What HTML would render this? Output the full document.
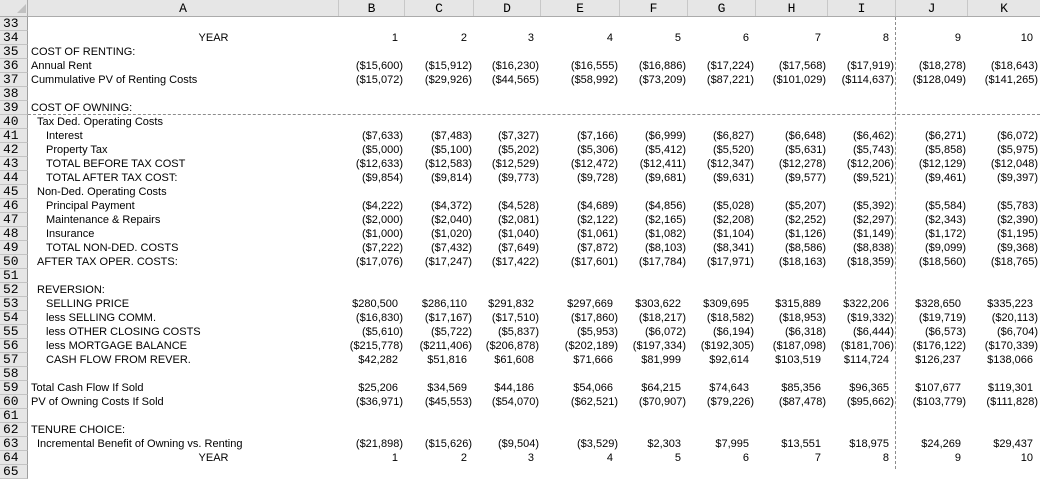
<!DOCTYPE html>
<html><head><meta charset="utf-8"><style>
*{margin:0;padding:0;box-sizing:border-box}
body{width:1040px;height:469px;overflow:hidden;background:#fff;font-family:"Liberation Sans",Arial,sans-serif;font-size:11px;color:#000;position:relative}
.hd{position:absolute;left:0;top:0;height:17px;width:1040px;background:#e6e6e6;border-bottom:1px solid #ababab;display:flex}
.hd div{height:16px;border-right:1px solid #c8c8c8;text-align:center;font-family:"Liberation Mono",monospace;font-size:13px;line-height:18px}
.r{position:absolute;left:0;height:14px;width:1040px;display:flex;line-height:15px;white-space:nowrap}
.r s{text-decoration:none;width:28px;flex:none;background:#e6e6e6;border-right:1px solid #9e9e9e;border-bottom:1px solid #c4c4c4;font-family:"Liberation Mono",monospace;font-size:13px;text-align:left;padding-left:3px;line-height:13px}
.r u{text-decoration:none;width:311px;flex:none;padding-left:3px;overflow:hidden}
.r u.a{padding-left:9px}.r u.b{padding-left:18px}.r u.c{text-align:center;padding-left:60px}
.r i{font-style:normal;flex:none;text-align:right;padding-right:2px}
.r i.p{padding-right:7px}
.w1{width:66px}.w2{width:69px}.w3{width:67px}.w4{width:79px}.w5{width:68px}.w6{width:68px}.w7{width:72px}.w8{width:68px}.w9{width:72px}.w10{width:72px}
.vb{position:absolute;left:895px;top:17px;height:452px;border-left:1px dashed #8c8c8c}
.hb{position:absolute;left:28px;top:114px;width:1012px;border-top:1px dashed #8c8c8c}
.corner{position:absolute;left:17px;top:4px;width:0;height:0;border-left:9px solid transparent;border-bottom:9px solid #c0c0c0}
</style></head><body>
<div class="hd"><div style="width:28px;border-right:1px solid #ababab"></div><div style="width:311px">A</div><div style="width:66px">B</div><div style="width:69px">C</div><div style="width:67px">D</div><div style="width:79px">E</div><div style="width:68px">F</div><div style="width:68px">G</div><div style="width:72px">H</div><div style="width:68px">I</div><div style="width:72px">J</div><div style="width:72px;border-right:none">K</div></div>
<div class="corner"></div>

<div class="r" style="top:17px"><s>33</s><u></u></div>
<div class="r" style="top:31px"><s>34</s><u class="c">YEAR</u><i class="p w1">1</i><i class="p w2">2</i><i class="p w3">3</i><i class="p w4">4</i><i class="p w5">5</i><i class="p w6">6</i><i class="p w7">7</i><i class="p w8">8</i><i class="p w9">9</i><i class="p w10">10</i></div>
<div class="r" style="top:45px"><s>35</s><u>COST OF RENTING:</u></div>
<div class="r" style="top:59px"><s>36</s><u>Annual Rent</u><i class="w1">($15,600)</i><i class="w2">($15,912)</i><i class="w3">($16,230)</i><i class="w4">($16,555)</i><i class="w5">($16,886)</i><i class="w6">($17,224)</i><i class="w7">($17,568)</i><i class="w8">($17,919)</i><i class="w9">($18,278)</i><i class="w10">($18,643)</i></div>
<div class="r" style="top:73px"><s>37</s><u>Cummulative PV of Renting Costs</u><i class="w1">($15,072)</i><i class="w2">($29,926)</i><i class="w3">($44,565)</i><i class="w4">($58,992)</i><i class="w5">($73,209)</i><i class="w6">($87,221)</i><i class="w7">($101,029)</i><i class="w8">($114,637)</i><i class="w9">($128,049)</i><i class="w10">($141,265)</i></div>
<div class="r" style="top:87px"><s>38</s><u></u></div>
<div class="r" style="top:101px"><s>39</s><u>COST OF OWNING:</u></div>
<div class="r" style="top:115px"><s>40</s><u class="a">Tax Ded. Operating Costs</u></div>
<div class="r" style="top:129px"><s>41</s><u class="b">Interest</u><i class="w1">($7,633)</i><i class="w2">($7,483)</i><i class="w3">($7,327)</i><i class="w4">($7,166)</i><i class="w5">($6,999)</i><i class="w6">($6,827)</i><i class="w7">($6,648)</i><i class="w8">($6,462)</i><i class="w9">($6,271)</i><i class="w10">($6,072)</i></div>
<div class="r" style="top:143px"><s>42</s><u class="b">Property Tax</u><i class="w1">($5,000)</i><i class="w2">($5,100)</i><i class="w3">($5,202)</i><i class="w4">($5,306)</i><i class="w5">($5,412)</i><i class="w6">($5,520)</i><i class="w7">($5,631)</i><i class="w8">($5,743)</i><i class="w9">($5,858)</i><i class="w10">($5,975)</i></div>
<div class="r" style="top:157px"><s>43</s><u class="b">TOTAL BEFORE TAX COST</u><i class="w1">($12,633)</i><i class="w2">($12,583)</i><i class="w3">($12,529)</i><i class="w4">($12,472)</i><i class="w5">($12,411)</i><i class="w6">($12,347)</i><i class="w7">($12,278)</i><i class="w8">($12,206)</i><i class="w9">($12,129)</i><i class="w10">($12,048)</i></div>
<div class="r" style="top:171px"><s>44</s><u class="b">TOTAL AFTER TAX COST:</u><i class="w1">($9,854)</i><i class="w2">($9,814)</i><i class="w3">($9,773)</i><i class="w4">($9,728)</i><i class="w5">($9,681)</i><i class="w6">($9,631)</i><i class="w7">($9,577)</i><i class="w8">($9,521)</i><i class="w9">($9,461)</i><i class="w10">($9,397)</i></div>
<div class="r" style="top:185px"><s>45</s><u class="a">Non-Ded. Operating Costs</u></div>
<div class="r" style="top:199px"><s>46</s><u class="b">Principal Payment</u><i class="w1">($4,222)</i><i class="w2">($4,372)</i><i class="w3">($4,528)</i><i class="w4">($4,689)</i><i class="w5">($4,856)</i><i class="w6">($5,028)</i><i class="w7">($5,207)</i><i class="w8">($5,392)</i><i class="w9">($5,584)</i><i class="w10">($5,783)</i></div>
<div class="r" style="top:213px"><s>47</s><u class="b">Maintenance &amp; Repairs</u><i class="w1">($2,000)</i><i class="w2">($2,040)</i><i class="w3">($2,081)</i><i class="w4">($2,122)</i><i class="w5">($2,165)</i><i class="w6">($2,208)</i><i class="w7">($2,252)</i><i class="w8">($2,297)</i><i class="w9">($2,343)</i><i class="w10">($2,390)</i></div>
<div class="r" style="top:227px"><s>48</s><u class="b">Insurance</u><i class="w1">($1,000)</i><i class="w2">($1,020)</i><i class="w3">($1,040)</i><i class="w4">($1,061)</i><i class="w5">($1,082)</i><i class="w6">($1,104)</i><i class="w7">($1,126)</i><i class="w8">($1,149)</i><i class="w9">($1,172)</i><i class="w10">($1,195)</i></div>
<div class="r" style="top:241px"><s>49</s><u class="b">TOTAL NON-DED. COSTS</u><i class="w1">($7,222)</i><i class="w2">($7,432)</i><i class="w3">($7,649)</i><i class="w4">($7,872)</i><i class="w5">($8,103)</i><i class="w6">($8,341)</i><i class="w7">($8,586)</i><i class="w8">($8,838)</i><i class="w9">($9,099)</i><i class="w10">($9,368)</i></div>
<div class="r" style="top:255px"><s>50</s><u class="a">AFTER TAX OPER. COSTS:</u><i class="w1">($17,076)</i><i class="w2">($17,247)</i><i class="w3">($17,422)</i><i class="w4">($17,601)</i><i class="w5">($17,784)</i><i class="w6">($17,971)</i><i class="w7">($18,163)</i><i class="w8">($18,359)</i><i class="w9">($18,560)</i><i class="w10">($18,765)</i></div>
<div class="r" style="top:269px"><s>51</s><u></u></div>
<div class="r" style="top:283px"><s>52</s><u class="a">REVERSION:</u></div>
<div class="r" style="top:297px"><s>53</s><u class="b">SELLING PRICE</u><i class="p w1">$280,500</i><i class="p w2">$286,110</i><i class="p w3">$291,832</i><i class="p w4">$297,669</i><i class="p w5">$303,622</i><i class="p w6">$309,695</i><i class="p w7">$315,889</i><i class="p w8">$322,206</i><i class="p w9">$328,650</i><i class="p w10">$335,223</i></div>
<div class="r" style="top:311px"><s>54</s><u class="b">less SELLING COMM.</u><i class="w1">($16,830)</i><i class="w2">($17,167)</i><i class="w3">($17,510)</i><i class="w4">($17,860)</i><i class="w5">($18,217)</i><i class="w6">($18,582)</i><i class="w7">($18,953)</i><i class="w8">($19,332)</i><i class="w9">($19,719)</i><i class="w10">($20,113)</i></div>
<div class="r" style="top:325px"><s>55</s><u class="b">less OTHER CLOSING COSTS</u><i class="w1">($5,610)</i><i class="w2">($5,722)</i><i class="w3">($5,837)</i><i class="w4">($5,953)</i><i class="w5">($6,072)</i><i class="w6">($6,194)</i><i class="w7">($6,318)</i><i class="w8">($6,444)</i><i class="w9">($6,573)</i><i class="w10">($6,704)</i></div>
<div class="r" style="top:339px"><s>56</s><u class="b">less MORTGAGE BALANCE</u><i class="w1">($215,778)</i><i class="w2">($211,406)</i><i class="w3">($206,878)</i><i class="w4">($202,189)</i><i class="w5">($197,334)</i><i class="w6">($192,305)</i><i class="w7">($187,098)</i><i class="w8">($181,706)</i><i class="w9">($176,122)</i><i class="w10">($170,339)</i></div>
<div class="r" style="top:353px"><s>57</s><u class="b">CASH FLOW FROM REVER.</u><i class="p w1">$42,282</i><i class="p w2">$51,816</i><i class="p w3">$61,608</i><i class="p w4">$71,666</i><i class="p w5">$81,999</i><i class="p w6">$92,614</i><i class="p w7">$103,519</i><i class="p w8">$114,724</i><i class="p w9">$126,237</i><i class="p w10">$138,066</i></div>
<div class="r" style="top:367px"><s>58</s><u></u></div>
<div class="r" style="top:381px"><s>59</s><u>Total Cash Flow If Sold</u><i class="p w1">$25,206</i><i class="p w2">$34,569</i><i class="p w3">$44,186</i><i class="p w4">$54,066</i><i class="p w5">$64,215</i><i class="p w6">$74,643</i><i class="p w7">$85,356</i><i class="p w8">$96,365</i><i class="p w9">$107,677</i><i class="p w10">$119,301</i></div>
<div class="r" style="top:395px"><s>60</s><u>PV of Owning Costs If Sold</u><i class="w1">($36,971)</i><i class="w2">($45,553)</i><i class="w3">($54,070)</i><i class="w4">($62,521)</i><i class="w5">($70,907)</i><i class="w6">($79,226)</i><i class="w7">($87,478)</i><i class="w8">($95,662)</i><i class="w9">($103,779)</i><i class="w10">($111,828)</i></div>
<div class="r" style="top:409px"><s>61</s><u></u></div>
<div class="r" style="top:423px"><s>62</s><u>TENURE CHOICE:</u></div>
<div class="r" style="top:437px"><s>63</s><u class="a">Incremental Benefit of Owning vs. Renting</u><i class="w1">($21,898)</i><i class="w2">($15,626)</i><i class="w3">($9,504)</i><i class="w4">($3,529)</i><i class="p w5">$2,303</i><i class="p w6">$7,995</i><i class="p w7">$13,551</i><i class="p w8">$18,975</i><i class="p w9">$24,269</i><i class="p w10">$29,437</i></div>
<div class="r" style="top:451px"><s>64</s><u class="c">YEAR</u><i class="p w1">1</i><i class="p w2">2</i><i class="p w3">3</i><i class="p w4">4</i><i class="p w5">5</i><i class="p w6">6</i><i class="p w7">7</i><i class="p w8">8</i><i class="p w9">9</i><i class="p w10">10</i></div>
<div class="r" style="top:465px"><s>65</s><u></u></div>

<div class="vb"></div>
<div class="hb"></div>
</body></html>
